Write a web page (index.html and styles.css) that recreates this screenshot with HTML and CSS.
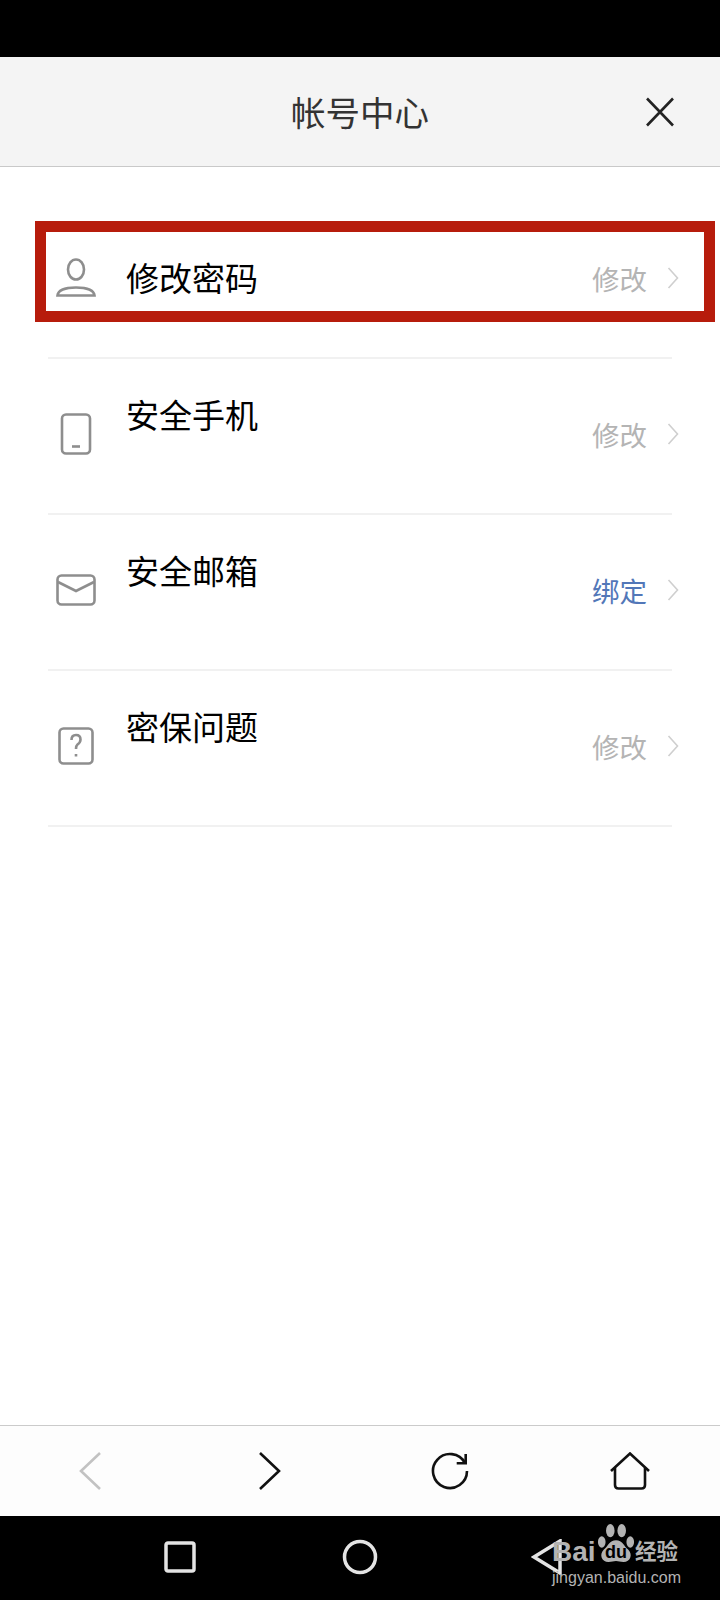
FILE: index.html
```html
<!doctype html>
<html lang="zh-CN">
<head>
  <meta charset="utf-8" />
  <meta name="viewport" content="width=device-width,initial-scale=1" />
  <title>帐号中心</title>
  <link rel="stylesheet" href="styles.css">
</head>
<body>
  <div class="phone">
    <div class="status-bar"></div>

    <header class="top-bar">
      <h1>帐号中心</h1>
      <button class="close-btn">
        <svg width="30" height="30" viewBox="0 0 30 30"><path d="M2 1.500 L28 28.500 M28 1.500 L2 28.500" /></svg>
      </button>
    </header>

    <main class="list">
      <div class="row first">
        <svg class="row-icon" width="40" height="40" viewBox="0 0 40 40">
          <ellipse cx="20" cy="11.500" rx="8" ry="10" />
          <path d="M1.500 37.500 C2 32.500 9 29.500 20 29.500 C31 29.500 38 32.500 38.500 37.500 Z" />
        </svg>
        <span class="row-title">修改密码</span>
        <span class="row-action">修改</span>
        <svg class="chevron" width="12" height="22" viewBox="0 0 12 22"><path d="M1.500 1 L10.500 11 L1.500 21" /></svg>
        <div class="mark"></div>
      </div>
      <div class="divider"></div>

      <div class="row">
        <svg class="row-icon" width="40" height="42" viewBox="0 0 40 42">
          <rect x="6" y="1.500" width="28" height="39" rx="4" />
          <path d="M16 33.500 H24" />
        </svg>
        <span class="row-title raised">安全手机</span>
        <span class="row-action">修改</span>
        <svg class="chevron" width="12" height="22" viewBox="0 0 12 22"><path d="M1.500 1 L10.500 11 L1.500 21" /></svg>
      </div>
      <div class="divider"></div>

      <div class="row">
        <svg class="row-icon" width="40" height="32" viewBox="0 0 40 32">
          <rect x="1.500" y="1.500" width="37" height="29" rx="4" />
          <path d="M2 8 L20 17 L38 8" />
        </svg>
        <span class="row-title raised">安全邮箱</span>
        <span class="row-action link">绑定</span>
        <svg class="chevron" width="12" height="22" viewBox="0 0 12 22"><path d="M1.500 1 L10.500 11 L1.500 21" /></svg>
      </div>
      <div class="divider"></div>

      <div class="row">
        <svg class="row-icon" width="40" height="38" viewBox="0 0 40 38">
          <rect x="3.500" y="1.500" width="33" height="35" rx="4" />
          <path d="M15.500 13 Q15.500 8 20 8 Q24.500 8 24.500 12.500 Q24.500 15.500 21.500 17.500 Q20 18.800 20 22" />
          <path d="M20 27 V29.500" />
        </svg>
        <span class="row-title raised">密保问题</span>
        <span class="row-action">修改</span>
        <svg class="chevron" width="12" height="22" viewBox="0 0 12 22"><path d="M1.500 1 L10.500 11 L1.500 21" /></svg>
      </div>
      <div class="divider"></div>
    </main>

    <nav class="tool-bar">
      <svg class="off" width="40" height="38" viewBox="0 0 40 38"><path d="M30 1 L11 19 L30 37" /></svg>
      <svg width="40" height="38" viewBox="0 0 40 38"><path d="M10 1 L29 19 L10 37" /></svg>
      <svg width="40" height="38" viewBox="0 0 40 38"><path d="M35 11 A17 17 0 1 0 37 19" /><path d="M26.700 11.300 H35.700 V2" /></svg>
      <svg width="42" height="38" viewBox="0 0 42 38"><path d="M2 19 L21 1.500 L40 19" /><path d="M6 16 V33 Q6 36.500 9.500 36.500 H32.500 Q36 36.500 36 33 V16" /></svg>
    </nav>

    <div class="nav-bar">
      <svg width="32" height="32" viewBox="0 0 32 32"><rect x="2" y="2" width="28" height="28" rx="2" /></svg>
      <svg width="36" height="36" viewBox="0 0 36 36"><ellipse cx="18" cy="18" rx="15.500" ry="15.500" /></svg>
      <svg class="nav-back" width="32" height="36" viewBox="0 0 32 36"><path d="M29 2 L3 18 L29 34 Z" /></svg>

      <div class="watermark">
        <div class="wm-top">
          <span class="wm-bai">Bai</span>
          <span class="wm-paw">
            <svg width="40" height="42" viewBox="0 0 40 42">
              <ellipse cx="5" cy="20" rx="4" ry="6" />
              <ellipse cx="14" cy="8" rx="4.500" ry="7" />
              <ellipse cx="26" cy="8" rx="4.500" ry="7" />
              <ellipse cx="35" cy="20" rx="4" ry="6" />
              <path d="M20 18 C27 18 28 24 33 28 C38 33 35 41 28 41 C24 41 23 40 20 40 C17 40 16 41 12 41 C5 41 2 33 7 28 C12 24 13 18 20 18 Z" />
            </svg>
            <span class="wm-du">du</span>
          </span>
          <span class="wm-cn">经验</span>
        </div>
        <div class="wm-url">jingyan.baidu.com</div>
      </div>
    </div>
  </div>
</body>
</html>
```

FILE: styles.css
```css
:root{
  --cjk: "Noto Sans CJK SC", "Liberation Sans", sans-serif;
}
html, body{ margin:0; padding:0; }
body{
  background:#fff;
  font-family:var(--cjk);
}

.phone{
  width:720px;
  height:1600px;
  display:flex;
  flex-direction:column;
  overflow:hidden;
}

.status-bar{ height:57px; background:#000; }

.top-bar{
  height:109px;
  flex:none;
  background:#f4f4f4;
  border-bottom:1px solid #c9c9c9;
  display:flex;
  align-items:center;
  justify-content:center;
  position:relative;
}
.top-bar h1{
  margin:0;
  font-size:34.500px;
  font-weight:400;
  color:#333;
  line-height:1;
}
.close-btn{
  position:absolute;
  right:45px;
  top:40px;
  width:30px;
  height:30px;
  padding:0;
  border:0;
  background:none;
}
.close-btn svg{ display:block; fill:none; stroke:#222; stroke-width:2.600; }

.list{
  flex:1;
  padding-top:35px;
}

.row{
  height:154px;
  padding:0 41px 0 56px;
  display:flex;
  align-items:center;
  position:relative;
}
.row.first{ height:155px; }

.row-icon{
  flex:none;
  fill:none;
  stroke:#8e8e8e;
  stroke-width:2.600;
  margin-top:-4px;
}
.row-title{
  margin-left:30px;
  margin-bottom:5px;
  font-size:33px;
  line-height:44px;
  color:#000;
}
.row-title.raised{ margin-bottom:44px; }
.row-action{
  margin-left:auto;
  font-size:27.500px;
  line-height:36px;
  color:#b4b4b4;
  margin-top:-4px;
}
.row-action.link{ color:#5277b8; }
.chevron{
  flex:none;
  margin-left:20px;
  margin-top:-4px;
  fill:none;
  stroke:#cfcfcf;
  stroke-width:1.600;
}

.divider{
  height:2px;
  margin:0 48px;
  background:#f1f1f1;
}

/* annotation drawn over the first row */
.mark{
  position:absolute;
  left:35px;
  right:5px;
  top:19px;
  height:79px;
  border:11px solid #b71c0c;
  pointer-events:none;
}

.tool-bar{
  height:90px;
  flex:none;
  background:#fdfdfd;
  border-top:1px solid #cbcbcb;
  display:grid;
  grid-template-columns:repeat(4, 1fr);
  align-items:center;
  justify-items:center;
}
.tool-bar svg{ fill:none; stroke:#111; stroke-width:2.600; }
.tool-bar svg.off{ stroke:#c2c2c2; }

.nav-bar{
  height:84px;
  flex:none;
  background:#000;
  display:flex;
  align-items:center;
  position:relative;
  padding-left:164px;
  gap:146px;
}
.nav-bar > svg{ fill:none; stroke:#e4e4e4; stroke-width:3.500; margin-top:-2px; }
.nav-bar > svg.nav-back{ margin-left:7px; }

.watermark{
  position:absolute;
  left:552px;
  top:7px;
  width:130px;
  color:#b3b3b3;
  font-family:"Liberation Sans", sans-serif;
}
.wm-top{
  display:flex;
  align-items:flex-end;
  height:40px;
}
.wm-bai{
  font-size:28px;
  font-weight:700;
  line-height:24px;
  width:45px;
  margin-bottom:-1px;
}
.wm-paw{ position:relative; width:38px; height:40px; flex:none; }
.wm-paw svg{ display:block; width:38px; height:40px; fill:#b3b3b3; }
.wm-du{
  position:absolute;
  left:8px;
  bottom:2px;
  font-size:18px;
  font-weight:700;
  line-height:18px;
  color:#000;
}
.wm-cn{
  font-family:var(--cjk);
  font-size:21.500px;
  font-weight:700;
  line-height:26px;
  white-space:nowrap;
}
.wm-url{
  font-size:16px;
  line-height:20px;
  margin-top:5px;
  white-space:nowrap;
}
```
